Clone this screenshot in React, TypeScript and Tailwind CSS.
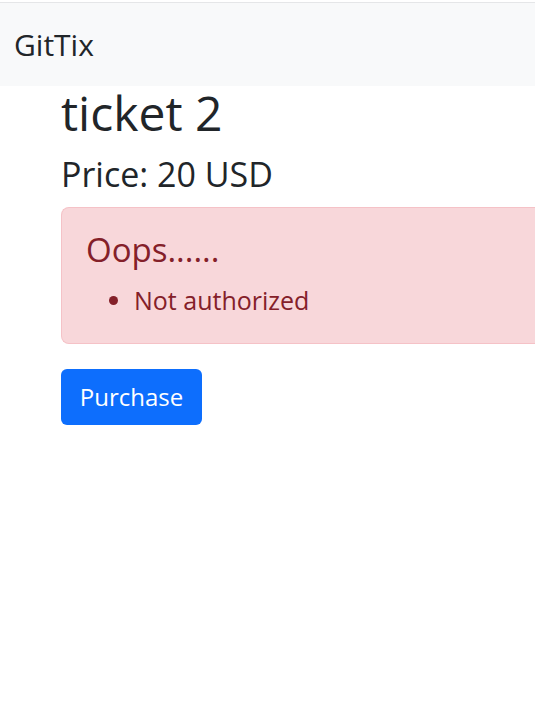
import React from "react";

const App = () => {
  const errors = ["Not authorized"];

  return (
    <div className="min-h-[714px] bg-white text-[#212529] [font-family:'Open_Sans',sans-serif]">
      {/* Navbar */}
      <nav className="mt-[2px] border-t border-[#e5e6e8] bg-[#f8f9fa] h-[84px] flex items-center px-[14px]">
        <span className="text-[30px] text-[#212529]">GitTix</span>
      </nav>

      <main className="pl-[61px]">
        <h1 className="text-[48px] leading-[54px]">ticket 2</h1>
        <h4 className="text-[34px] leading-[44px] mt-[12px]">Price: 20 USD</h4>

        {/* Error alert */}
        <div className="mt-[11px] h-[137px] rounded-l-[8px] border border-r-0 border-[#f5c2c7] bg-[#f8d7da] text-[#842029] pl-[24px] pt-[19px]">
          <h4 className="text-[33px] leading-[46px]">Oops......</h4>
          <ul className="list-disc pl-[48px] mt-[10px]">
            {errors.map((err, index) => (
              <li key={index} className="text-[25px] leading-[34px]">
                {err}
              </li>
            ))}
          </ul>
        </div>

        {/* Purchase button */}
        <button className="mt-[25px] h-[56px] w-[141px] rounded-[6px] bg-[#0d6efd] text-white text-[24px]">
          Purchase
        </button>
      </main>
    </div>
  );
};

export default App;
